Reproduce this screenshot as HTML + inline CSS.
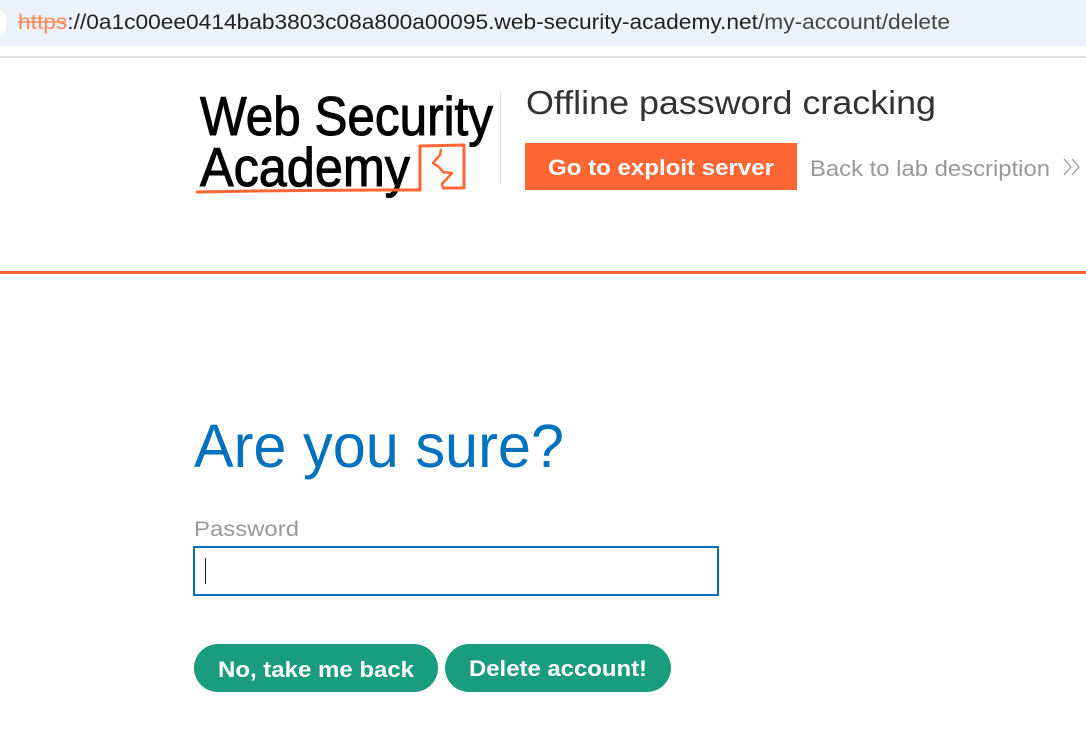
<!DOCTYPE html>
<html><head><meta charset="utf-8"><style>
html,body{margin:0;padding:0;width:1086px;height:753px;overflow:hidden;background:#fff;font-family:"Liberation Sans",Arial,sans-serif;}
.abs{position:absolute;}
</style></head><body>
<div class="abs" style="left:0;top:0;width:1086px;height:46px;background:#edf1f9;"></div>
<div class="abs" style="left:-14px;top:9px;width:20px;height:28px;border-radius:14px;background:#fff;"></div>
<div class="abs" style="left:0;top:56px;width:1086px;height:2px;background:#e0e0e0;"></div>
<svg class="abs" style="left:0;top:0" width="1086" height="753">
  <text x="18" y="29" font-family="Liberation Sans" font-size="21" textLength="932" lengthAdjust="spacingAndGlyphs" fill="#222"><tspan fill="#f58a5c">https</tspan>://0a1c00ee0414bab3803c08a800a00095.web-security-academy.net<tspan fill="#444">/my-account/delete</tspan></text>
  <line x1="18" y1="22" x2="66" y2="22" stroke="#f58a5c" stroke-width="1.5"/>
  <text x="200" y="135" font-family="Liberation Sans" font-size="55" textLength="293" lengthAdjust="spacingAndGlyphs" fill="#000" stroke="#000" stroke-width="1">Web Security</text>
  <text x="200" y="186" font-family="Liberation Sans" font-size="55" textLength="210" lengthAdjust="spacingAndGlyphs" fill="#000" stroke="#000" stroke-width="1">Academy</text>
  <path d="M196 192 Q300 190 406 190 L420 190 L420 146 L464 145 L464 188 L443 188" fill="none" stroke="#ff6633" stroke-width="3" stroke-linejoin="round"/>
  <path d="M441 150 L440 155 L433 163 L439 167 L443 172 L452 173 L442 184 L443 188" fill="none" stroke="#ff6633" stroke-width="2.5" stroke-linejoin="round" stroke-linecap="round"/>
  <line x1="500.5" y1="92" x2="500.5" y2="184" stroke="#ddd" stroke-width="1"/>
  <text x="526" y="114" font-family="Liberation Sans" font-size="33" textLength="410" lengthAdjust="spacingAndGlyphs" fill="#333">Offline password cracking</text>
  <rect x="525" y="143" width="272" height="47" fill="#ff6633"/>
  <text x="661" y="175" text-anchor="middle" font-family="Liberation Sans" font-weight="bold" font-size="22" textLength="226" lengthAdjust="spacingAndGlyphs" fill="#fff">Go to exploit server</text>
  <text x="810" y="176" font-family="Liberation Sans" font-size="22" textLength="240" lengthAdjust="spacingAndGlyphs" fill="#999">Back to lab description</text>
  <path d="M1064 159 L1071 167 L1064 175 M1072 159 L1079 167 L1072 175" fill="none" stroke="#999" stroke-width="1.3"/>
  <rect x="0" y="271" width="1086" height="3" fill="#ff6633"/>
  <text x="194" y="467" font-family="Liberation Sans" font-size="61" textLength="370" lengthAdjust="spacingAndGlyphs" fill="#0071bc">Are you sure?</text>
  <text x="194" y="536" font-family="Liberation Sans" font-size="21" textLength="105" lengthAdjust="spacingAndGlyphs" fill="#999">Password</text>
  <rect x="194" y="547" width="524" height="48" fill="#fff" stroke="#0071bc" stroke-width="2"/>
  <line x1="205.5" y1="558" x2="205.5" y2="584" stroke="#222" stroke-width="1"/>
  <rect x="194" y="644" width="244" height="48" rx="24" fill="#1a9c7e"/>
  <text x="316" y="677" text-anchor="middle" font-family="Liberation Sans" font-weight="bold" font-size="22" textLength="196" lengthAdjust="spacingAndGlyphs" fill="#fff">No, take me back</text>
  <rect x="445" y="644" width="226" height="48" rx="24" fill="#1a9c7e"/>
  <text x="558" y="676" text-anchor="middle" font-family="Liberation Sans" font-weight="bold" font-size="22" textLength="178" lengthAdjust="spacingAndGlyphs" fill="#fff">Delete account!</text>
</svg>
</body></html>
